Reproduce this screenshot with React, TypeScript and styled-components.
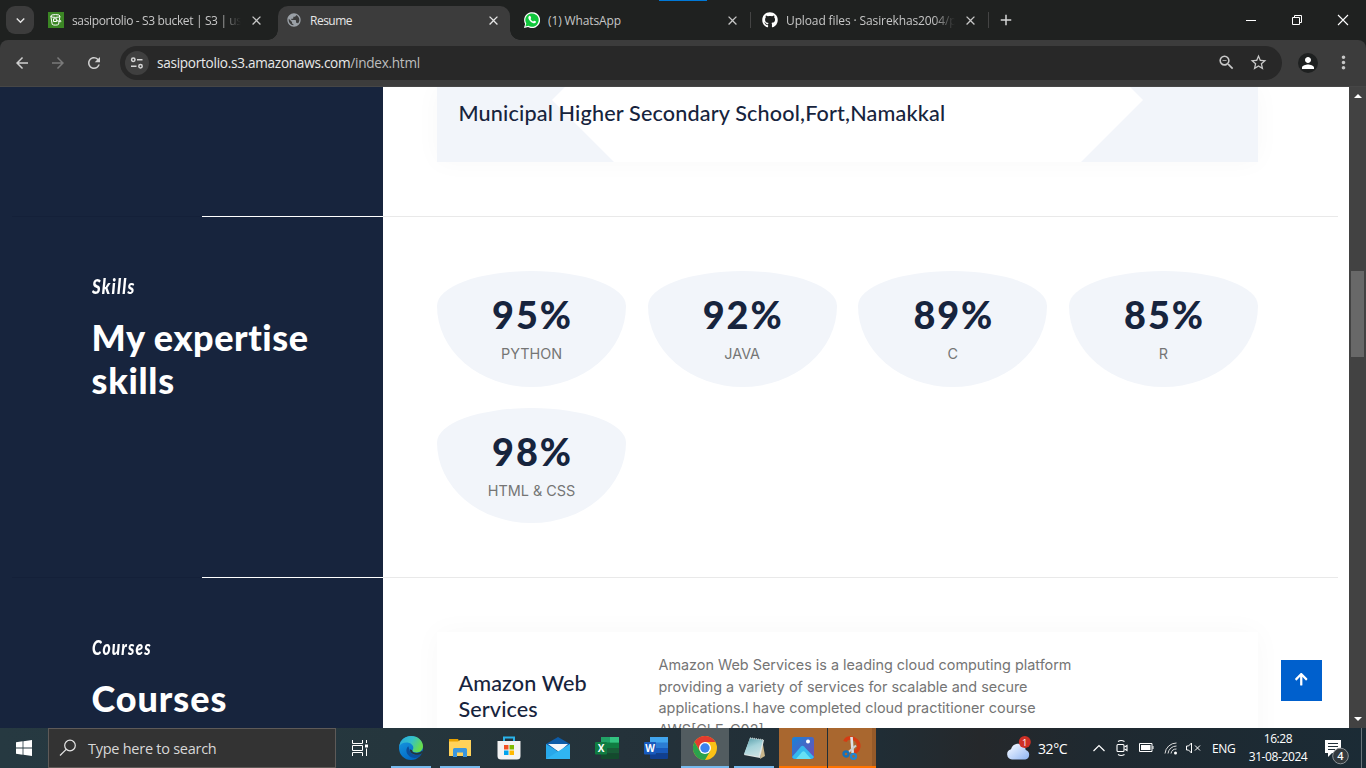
import React from "react";
import styled, { createGlobalStyle, css } from "styled-components";
import {
  MdArrowBack, MdArrowForward, MdRefresh, MdOutlineZoomOut, MdStarBorder,
  MdPerson, MdMoreVert, MdPublic, MdClose, MdAdd, MdKeyboardArrowDown,
} from "react-icons/md";
import { FaGithub, FaArrowUp } from "react-icons/fa";

const ui = `"Open Sans", "Noto Sans", sans-serif`;
const display = `Lato, "Liberation Sans", sans-serif`;
const navy = "#17243d";

const Global = createGlobalStyle`
  * { box-sizing: border-box; }
  body { margin: 0; background: #fff; overflow: hidden; }
  svg { display: block; flex: none; }
  h2, h3, p { margin: 0; }
`;

const Screen = styled.div`
  width: 1366px;
  height: 768px;
  display: flex;
  flex-direction: column;
  overflow: hidden;
  font-family: ${ui};
`;

/* Tab strip */
const TabStrip = styled.header`
  position: relative;
  height: 40px;
  flex: none;
  display: flex;
  align-items: flex-end;
  background: #1f2120;
  color: #c7c7c7;
`;
const LoadingMark = styled.i`
  position: absolute;
  top: 0;
  left: 659px;
  width: 48px;
  height: 1px;
  background: #0078d7;
`;
const TabSearch = styled.div`
  width: 28px;
  height: 28px;
  margin: 0 4px 6px 6px;
  border-radius: 9px;
  background: #3c3c3c;
  display: grid;
  place-items: center;
  color: #e4e4e4;
`;
const Tab = styled.div<{ $w: number; $active?: boolean; $pad?: number; $end?: number }>`
  position: relative;
  width: ${(p) => p.$w}px;
  height: 34px;
  padding: 0 ${(p) => p.$end ?? 10}px 6px ${(p) => p.$pad ?? 8}px;
  display: flex;
  align-items: center;
  font-size: 12px;
  ${(p) => p.$active && css`
    background: #3c3c3c;
    color: #e6e6e6;
    border-radius: 10px 10px 0 0;
    &::before, &::after {
      content: "";
      position: absolute;
      bottom: 0;
      width: 10px;
      height: 10px;
    }
    &::before { left: -10px; background: radial-gradient(circle at 0 0, transparent 9.5px, #3c3c3c 10px); }
    &::after { right: -10px; background: radial-gradient(circle at 100% 0, transparent 9.5px, #3c3c3c 10px); }
  `}
`;
const TabTitle = styled.span<{ $fade?: boolean; $ls?: number }>`
  flex: 1;
  min-width: 0;
  margin: 1px 8px 0 8px;
  overflow: hidden;
  white-space: nowrap;
  letter-spacing: ${(p) => p.$ls ?? -0.12}px;
  ${(p) => p.$fade && css`mask-image: linear-gradient(90deg, #000 calc(100% - 22px), transparent);`}
`;
const Divider = styled.i`
  width: 1px;
  height: 16px;
  margin-bottom: 12px;
  background: #444;
`;
const NewTab = styled.div`
  margin: 0 0 11px 8px;
  color: #d5d5d5;
`;
const WindowButtons = styled.div`
  margin-left: auto;
  height: 40px;
  display: flex;
  & > svg { width: 46px; height: 40px; }
`;

/* Toolbar */
const ToolbarBack = styled.div`
  flex: none;
  height: 47px;
  background: #1f2120;
`;
const Toolbar = styled.div`
  height: 47px;
  display: flex;
  align-items: center;
  padding: 0 12px 1px 13px;
  background: #3c3c3c;
  border-radius: 8px 8px 0 0;
  border-bottom: 1px solid #464646;
  color: #c7c7c7;
`;
const NavIcon = styled.span<{ $dim?: boolean; $gap?: number }>`
  margin-right: ${(p) => p.$gap ?? 18}px;
  color: ${(p) => (p.$dim ? "#7a7a7a" : "#cfcfcf")};
`;
const AddressBar = styled.div`
  width: 1162px;
  flex: none;
  height: 34px;
  padding: 0 14px 0 5px;
  display: flex;
  align-items: center;
  border-radius: 17px;
  background: #282828;
`;
const SiteInfo = styled.div`
  width: 24px;
  height: 24px;
  margin-right: 8px;
  border-radius: 50%;
  background: #3f3f3f;
  display: grid;
  place-items: center;
`;
const Url = styled.span`
  flex: 1;
  font-size: 13.6px;
  letter-spacing: -0.28px;
  color: #e8e8e8;
  & > span { color: #bdbdbd; }
`;
const AddressIcon = styled.span`
  margin-left: 13px;
  color: #c9c9c9;
`;
const Avatar = styled.div`
  width: 20px;
  height: 20px;
  flex: none;
  margin: 0 15px 0 16px;
  border-radius: 50%;
  background: #1e2020;
  color: #fff;
  display: grid;
  place-items: center;
`;

/* Web page */
const Viewport = styled.div`
  position: relative;
  height: 641px;
  flex: none;
  display: flex;
`;
const Page = styled.main`
  width: 1349px;
  height: 641px;
  overflow: hidden;
  background: #fff;
`;
const Section = styled.section<{ $h: number }>`
  height: ${(p) => p.$h}px;
  display: flex;
`;
const Side = styled.aside`
  width: 383px;
  flex: none;
  padding: 54px 0 0 91.5px;
  background: ${navy};
  color: #fff;
`;
const Content = styled.div<{ $top: number }>`
  width: 875px;
  padding: ${(p) => p.$top}px 0 0 54px;
`;
const Rule = styled.div`
  height: 1px;
  background: linear-gradient(90deg, ${navy} 0 12px, #142039 12px 202px, #fff 202px 383px, #e9e9e9 383px 1338px, #fff 1338px);
`;
const Kicker = styled.div<{ $squeeze: number }>`
  height: 34px;
  font: italic 900 20px/30px ${display};
  letter-spacing: 1.4px;
  transform: scaleX(${(p) => p.$squeeze});
  transform-origin: left;
`;
const Heading = styled.h2`
  margin-top: 11px;
  width: 240px;
  font: 900 36px/43px ${display};
  white-space: nowrap;
`;
const Line = styled.span<{ $ls: number }>`
  display: block;
  letter-spacing: ${(p) => p.$ls}px;
`;
const SchoolCard = styled.article`
  position: relative;
  height: 75px;
  padding: 13px 21.5px;
  background: #f2f5fa;
  box-shadow: 0 0 27px rgba(0, 0, 0, 0.03);
  &::before {
    content: "";
    position: absolute;
    inset: 0 115px;
    background: #fff;
    clip-path: polygon(13px 0, 0 13px, 62px 100%, 529px 100%, 591px 13px, 578px 0);
  }
`;
const CardTitle = styled.h3<{ $ls: number }>`
  position: relative;
  font: 500 21.6px/26px ${display};
  letter-spacing: ${(p) => p.$ls}px;
  color: ${navy};
  white-space: nowrap;
`;
const SkillGrid = styled.div`
  display: grid;
  grid-template-columns: repeat(4, 1fr);
  column-gap: 21.6px;
  row-gap: 21px;
`;
const Skill = styled.div`
  height: 115.7px;
  padding-top: 21px;
  border-radius: 50% 50% 50% 50% / 30% 30% 70% 70%;
  background: #f2f5fa;
  text-align: center;
`;
const Percent = styled.div`
  font: 900 37.8px/45px ${display};
  letter-spacing: 1.9px;
  padding-left: 2px;
  color: ${navy};
`;
const SkillName = styled.div`
  margin-top: 6px;
  font: 400 14.4px/22px Inter, sans-serif;
  color: #757575;
`;
const CourseCard = styled.article`
  display: flex;
  height: 160px;
  padding: 22px 22px 22px 21.5px;
  box-shadow: 0 0 27px rgba(0, 0, 0, 0.03);
`;
const CourseName = styled.div`
  width: 200px;
  padding-top: 16px;
`;
const CourseText = styled.p`
  font: 400 14.4px/21.6px Inter, sans-serif;
  color: #757575;
  white-space: nowrap;
`;
const ToTop = styled.button`
  position: absolute;
  left: 1281px;
  top: 573px;
  width: 41px;
  height: 41px;
  padding: 0 1px 2px 0;
  border: 0;
  background: #0060cd;
  color: #fff;
  display: grid;
  place-items: center;
`;
const Scrollbar = styled.div`
  width: 17px;
  height: 641px;
  padding: 7px 0;
  display: flex;
  flex-direction: column;
  align-items: center;
  background: #424242;
`;
const Thumb = styled.div`
  width: 13px;
  height: 86px;
  margin: 173px 0 auto;
  background: #686868;
`;

/* Taskbar */
const Taskbar = styled.footer`
  height: 40px;
  flex: none;
  display: flex;
  color: #fff;
  background: linear-gradient(90deg, #263941 0, #25363d 400px, #24323a 620px, #202d35 880px, #25282b 980px, #1f2930 1090px, #1b2b35 1366px);
`;
const Start = styled.div`
  width: 48px;
  display: grid;
  place-items: center;
`;
const SearchBox = styled.div`
  width: 288px;
  display: flex;
  align-items: center;
  gap: 11px;
  padding-left: 10px;
  background: #333;
  border: 1px solid #5e5a58;
  color: #d8d8d8;
  font-size: 14.5px;
  letter-spacing: -0.26px;
`;
const TaskView = styled.div`
  width: 51px;
  padding-right: 3px;
  display: grid;
  place-items: center;
`;
const Apps = styled.div`
  display: flex;
  gap: 1px;
`;
const AppCell = styled.div<{ $bg?: string; $line?: string; $full?: boolean }>`
  width: 48px;
  height: 40px;
  display: grid;
  place-items: center;
  background:
    linear-gradient(${(p) => p.$line ?? "transparent"} 0 0) center bottom / ${(p) => (p.$full ? 48 : 40)}px 2px no-repeat,
    ${(p) => p.$bg ?? "transparent"};
`;
const Tray = styled.div`
  margin-left: auto;
  display: flex;
  align-items: center;
  font-size: 12px;
`;
const Temperature = styled.span`
  width: 61px;
  padding-left: 6px;
  font-size: 14px;
  letter-spacing: -0.4px;
`;
const TrayIcons = styled.div`
  display: flex;
  align-items: center;
  margin-right: 11px;
  gap: 10px;
  & > :last-child { margin-left: -2px; }
`;
const Lang = styled.span`
  width: 29px;
  font-size: 12px;
  letter-spacing: -0.4px;
`;
const Clock = styled.div`
  width: 74px;
  margin: 0 10px 1px 0;
  text-align: center;
  line-height: 18px;
  letter-spacing: -0.4px;
`;
const Notifications = styled.svg`
  margin-top: 8px;
`;
const ShowDesktop = styled.i`
  width: 5px;
  height: 40px;
  margin-left: 10px;
  border-left: 1px solid #69747a;
`;

const S3Icon = () => (
  <svg width="16" height="16" viewBox="0 0 16 16">
    <rect width="16" height="16" fill="#3b8624" />
    <g fill="none" stroke="#fff" strokeWidth="1">
      <ellipse cx="7.4" cy="4" rx="4.6" ry="1.4" />
      <path d="M2.8 4l1.4 8.3c.7 1.1 5.700 1.100 6.400 0L12 4" />
      <path d="M5.500 6.800h3.200v2.700H5.500zM8.700 8.500l3.800 1.200c.9 0 .6-.9-.8-1.900" />
    </g>
  </svg>
);
const WhatsAppIcon = () => (
  <svg width="16" height="16" viewBox="0 0 16 16">
    <path d="M0 16l1.1-4A8 8 0 1 1 4 15z" fill="#fff" />
    <path d="M1.4 14.6l.9-3A6.7 6.7 0 1 1 4.5 13.8z" fill="#10c63b" />
    <path d="M5.1 3.9c-1.4 1.1-.9 3.3 1.2 5.4s4.6 2.7 5.5 1.3c.5-.8.2-1.1-.2-1.3l-1.3-.6c-.5-.2-.7.6-1.2.9-.5 0-2.2-1.4-2.6-2.5.2-.5.8-.8.6-1.3l-.6-1.5c-.2-.5-.9-.7-1.4-.4z" fill="#fff" />
  </svg>
);
const TuneIcon = () => (
  <svg width="14" height="14" viewBox="0 0 14 14" fill="none" stroke="#d6d6d6" strokeWidth="1.5">
    <circle cx="3.3" cy="3.8" r="1.7" /><path d="M7 3.8h5.5M1 10.2h5.5" /><circle cx="10.5" cy="10.2" r="1.7" />
  </svg>
);
const EdgeIcon = () => (
  <svg width="24" height="24" viewBox="0 0 24 24">
    <defs>
      <linearGradient id="e1" x1="0" y1="0" x2="1" y2=".4"><stop stopColor="#27a8e0" /><stop offset=".55" stopColor="#35c1c8" /><stop offset="1" stopColor="#67dc4c" /></linearGradient>
      <linearGradient id="e2" x1="0" y1="0" x2=".6" y2="1"><stop stopColor="#1b9de2" /><stop offset="1" stopColor="#0067c4" /></linearGradient>
    </defs>
    <circle cx="12" cy="12" r="12" fill="url(#e2)" />
    <path d="M.2 10.3C1.5 3.5 6.5 0 12 0c7.300 0 12 5 12 10.300 0 3.700-2.600 6.200-6.200 6.200-3.300 0-4.800-1-4.600-1.900.2-.8 1.300-1.200 1.100-3.300C14 8.700 11.200 6.500 7.500 6.500 4 6.500 1.300 8.200.2 10.300z" fill="url(#e1)" />
    <path d="M9.300 10.300c-2.300 2-2.600 5.700-.3 8.500 2.400 3 6.400 4 9.500 2.800a12 12 0 0 0 4.200-4c-3.200 1.800-8 1.700-10.500-.6-2.300-2.100-1.700-4.500-2.900-6.700z" fill="#0c4f9c" />
    <path d="M13.400 14.200c-.7 1.400.9 2.700 4.400 2.700 2.300 0 4.300-1 5.200-2.100l1.200 1.300-1.500 1.500c-3 1.800-7.700 1.700-10.200-.5-1.300-1.200-1.700-2.600-1.700-3.900z" fill="#26353c" />
  </svg>
);
const FolderIcon = () => (
  <svg width="22" height="20" viewBox="0 0 22 20">
    <path d="M0 1h9l1.500 3H22v13H0z" fill="#e8a200" />
    <path d="M0 3.500h9L11 2h11v16H0z" fill="#ffd25a" />
    <path d="M4 11.500Q4 10 5.500 10h11q1.500 0 1.500 1.500V19h-4v-4.500H8V19H4z" fill="#3a96dd" />
  </svg>
);
const StoreIcon = () => (
  <svg width="24" height="24" viewBox="0 0 24 24">
    <path d="M7 6V1.500h10V6" fill="none" stroke="#2ab3ea" strokeWidth="2" />
    <path d="M.5 5h23v15q0 3.500-3.500 3.500H4Q.5 23.500.5 20z" fill="#f3f3f3" />
    <path d="M7 9h4.500v4.500H7z" fill="#f25022" /><path d="M12.500 9H17v4.500h-4.500z" fill="#7fba00" />
    <path d="M7 14.500h4.500V19H7z" fill="#00a4ef" /><path d="M12.500 14.500H17V19h-4.500z" fill="#ffb900" />
  </svg>
);
const MailIcon = () => (
  <svg width="24" height="22" viewBox="0 0 24 22">
    <path d="M0 7L12 0l12 7v6H0z" fill="#0d5ca8" /><path d="M2 7h20L13 15z" fill="#f3f7fb" />
    <path d="M0 7l12 7.500V22H0z" fill="#28a8ea" /><path d="M24 7L0 22h24z" fill="#30b5f2" />
  </svg>
);
const OfficeIcon = ({ letter, colors }: { letter: string; colors: string[] }) => (
  <svg width="24" height="22" viewBox="0 0 24 22">
    <path d="M6 0h18v6H6z" fill={colors[0]} /><path d="M6 5.500h18V11H6z" fill={colors[1]} />
    <path d="M6 11h18v5.500H6z" fill={colors[2]} /><path d="M6 16.500h18V21q0 1-1 1H7q-1 0-1-1z" fill={colors[3]} />
    {letter === "X" && <path d="M15 0h9v5.500h-9z" fill="#33c481" />}
    <rect y="5" width="12" height="12.500" rx="1" fill={colors[4]} />
    <text x="6" y="15" textAnchor="middle" fontFamily="Open Sans, sans-serif" fontWeight="700" fontSize="10" fill="#fff">{letter}</text>
  </svg>
);
const ChromeIcon = () => (
  <svg width="24" height="24" viewBox="0 0 24 24">
    <circle cx="12" cy="12" r="12" fill="#fbc116" />
    <path d="M1.600 6A12 12 0 0 1 22.400 6H12L6.800 15z" fill="#e33b2e" />
    <path d="M1.600 6A12 12 0 0 0 12 24l5.200-9H6.800z" fill="#2ba24c" />
    <circle cx="12" cy="12" r="6" fill="#fff" /><circle cx="12" cy="12" r="4.700" fill="#3b82ee" />
  </svg>
);
const NotepadIcon = () => (
  <svg width="24" height="24" viewBox="0 0 24 24">
    <defs><linearGradient id="n" x2=".4" y2="1"><stop stopColor="#5299a6" /><stop offset=".55" stopColor="#a4d2d9" /><stop offset="1" stopColor="#c5dfe2" /></linearGradient></defs>
    <path d="M20 3l3 17-5 3z" fill="#c9b68c" /><path d="M8 2l14 2-4 18L2 19z" fill="#dfe5e5" />
    <path d="M8 2l13 2-4.500 16.500L2 18z" fill="url(#n)" /><path d="M8 2l14 2" stroke="#b8c4c6" strokeWidth="1.500" strokeDasharray="1 1" />
  </svg>
);
const PhotosIcon = () => (
  <svg width="22" height="22" viewBox="0 0 22 22">
    <defs><linearGradient id="p" x2="1" y2="1"><stop stopColor="#1683d9" /><stop offset="1" stopColor="#764bb1" /></linearGradient></defs>
    <rect width="22" height="22" rx="2.500" fill="url(#p)" />
    <path d="M0 20L9 9.500q1.500-1.500 3 0L22 20q-1 2-3 2H3q-2 0-3-2z" fill="#35b9ee" />
    <path d="M4 22l6-7q1.500-1.500 3 0l6 7z" fill="#66e0f5" /><circle cx="16" cy="4.500" r="2" fill="#fff" />
  </svg>
);
const SnipIcon = () => (
  <svg width="22" height="24" viewBox="0 0 22 24" fill="none">
    <path d="M4 5.500C5 1.500 11 .8 15 4c4.500 4 3.500 10.500-2 12.500" stroke="#d63b12" strokeWidth="3.400" />
    <path d="M10.500 1l1.200 16" stroke="#dce1e5" strokeWidth="2.600" />
    <path d="M15 9.500L7 16.500" stroke="#c9ced2" strokeWidth="2" />
    <circle cx="5" cy="18" r="2.500" stroke="#1671b9" strokeWidth="2.300" />
    <circle cx="12.500" cy="20.300" r="2.500" stroke="#2385cf" strokeWidth="2.300" />
  </svg>
);
const WeatherIcon = () => (
  <svg width="26" height="26" viewBox="0 0 26 26">
    <defs><linearGradient id="w" y2="1"><stop offset=".2" stopColor="#e7f0ff" /><stop offset="1" stopColor="#8db4f2" /></linearGradient></defs>
    <path d="M6 24.500a5.200 5.200 0 0 1-1-10.200A7.500 7.500 0 0 1 18.500 12q1 1 1.200 3a4.900 4.900 0 0 1-.5 9.500z" fill="url(#w)" />
    <circle cx="18.800" cy="7" r="6" fill="#cf3026" />
    <text x="18.800" y="10.500" fontSize="9.500" textAnchor="middle" fontFamily="Open Sans, sans-serif" fill="#fff">1</text>
  </svg>
);

const skills = [["95%", "PYTHON"], ["92%", "JAVA"], ["89%", "C"], ["85%", "R"], ["98%", "HTML & CSS"]];

export default function App() {
  return (
    <Screen>
      <Global />
      <TabStrip>
        <LoadingMark />
        <TabSearch><MdKeyboardArrowDown size={17} /></TabSearch>
        <Tab $w={240} $pad={10} $end={14}>
          <S3Icon /><TabTitle $fade $ls={-0.36}>sasiportolio - S3 bucket | S3 | us-east-1</TabTitle><MdClose size={15} />
        </Tab>
        <Tab $w={232} $active $end={9}>
          <MdPublic size={16} color="#9aa0a6" /><TabTitle $ls={-0.5}>Resume</TabTitle><MdClose size={15} />
        </Tab>
        <Tab $w={240} $pad={14}>
          <WhatsAppIcon /><TabTitle>(1) WhatsApp</TabTitle><MdClose size={15} />
        </Tab>
        <Divider />
        <Tab $w={237} $pad={11}>
          <FaGithub size={16} color="#fff" /><TabTitle $fade>Upload files · Sasirekhas2004/portfolio</TabTitle><MdClose size={15} />
        </Tab>
        <Divider />
        <NewTab><MdAdd size={18} /></NewTab>
        <WindowButtons>
          <svg viewBox="0 0 46 40"><path d="M18 20.500h10" stroke="#fff" /></svg>
          <svg viewBox="0 0 46 40" fill="none" stroke="#fff"><path d="M18.500 17.500h7v7h-7zM20.500 17.500v-2h7v7h-2" /></svg>
          <svg viewBox="0 0 46 40"><path d="M18 15l10 10M28 15L18 25" stroke="#fff" strokeWidth="1.100" /></svg>
        </WindowButtons>
      </TabStrip>
      <ToolbarBack>
        <Toolbar>
          <NavIcon><MdArrowBack size={18} /></NavIcon>
          <NavIcon $dim><MdArrowForward size={18} /></NavIcon>
          <NavIcon $gap={17}><MdRefresh size={18} /></NavIcon>
          <AddressBar>
            <SiteInfo><TuneIcon /></SiteInfo>
            <Url>sasiportolio.s3.amazonaws.com<span>/index.html</span></Url>
            <AddressIcon><MdOutlineZoomOut size={19} /></AddressIcon>
            <AddressIcon><MdStarBorder size={19} /></AddressIcon>
          </AddressBar>
          <Avatar><MdPerson size={18} /></Avatar>
          <MdMoreVert size={21} />
        </Toolbar>
      </ToolbarBack>

      <Viewport>
        <Page>
          <Section $h={129}>
            <Side />
            <Content $top={0}>
              <SchoolCard><CardTitle $ls={0.16}>Municipal Higher Secondary School,Fort,Namakkal</CardTitle></SchoolCard>
            </Content>
          </Section>
          <Rule />
          <Section $h={360}>
            <Side>
              <Kicker $squeeze={0.84}>Skills</Kicker>
              <Heading><Line $ls={0.55}>My expertise</Line><Line $ls={0.7}>skills</Line></Heading>
            </Side>
            <Content $top={54}>
              <SkillGrid>
                {skills.map(([value, name]) => (
                  <Skill key={name}><Percent>{value}</Percent><SkillName>{name}</SkillName></Skill>
                ))}
              </SkillGrid>
            </Content>
          </Section>
          <Rule />
          <Section $h={220}>
            <Side>
              <Kicker $squeeze={0.78}>Courses</Kicker>
              <Heading><Line $ls={0.95}>Courses</Line><Line $ls={1.6}>Attained</Line></Heading>
            </Side>
            <Content $top={54}>
              <CourseCard>
                <CourseName><CardTitle $ls={0.1}>Amazon Web<br />Services</CardTitle></CourseName>
                <CourseText>
                  Amazon Web Services is a leading cloud computing platform<br />
                  providing a variety of services for scalable and secure<br />
                  applications.I have completed cloud practitioner course<br />
                  AWS[CLF-C02]
                </CourseText>
              </CourseCard>
            </Content>
          </Section>
        </Page>
        <Scrollbar>
          <svg width="8" height="4" viewBox="0 0 8 4"><path d="M0 4l4-4 4 4z" fill="#fff" /></svg>
          <Thumb />
          <svg width="8" height="4" viewBox="0 0 8 4"><path d="M0 0l4 4 4-4z" fill="#fff" /></svg>
        </Scrollbar>
        <ToTop><FaArrowUp size={14.5} /></ToTop>
      </Viewport>

      <Taskbar>
        <Start>
          <svg width="16" height="16" viewBox="0 0 16 16" fill="#fff"><path d="M0 2.300L6.600 1.300v6.300H0zM7.400 1.200L16 0v7.600H7.400zM0 8.400h6.600v6.300L0 13.700zM7.400 8.400H16V16l-8.600-1.200z" /></svg>
        </Start>
        <SearchBox>
          <svg width="18" height="18" viewBox="0 0 18 18" fill="none" stroke="#e6e6e6" strokeWidth="1.200"><circle cx="11" cy="6.500" r="5.300" /><path d="M7.200 10.300L1 16.500" /></svg>
          Type here to search
        </SearchBox>
        <TaskView>
          <svg width="18" height="16" viewBox="0 0 18 16" fill="none" stroke="#fff"><path d="M1.500 0v3.500h10V0M1.500 16v-3.500h10V16M1.500 5.500h10v5h-10zM15.500 0v3M15.500 8.500V16" /><path d="M14 4.500h3v3h-3z" fill="#fff" stroke="none" /></svg>
        </TaskView>
        <Apps>
          <AppCell $line="#76b9ed"><EdgeIcon /></AppCell>
          <AppCell $line="#76b9ed"><FolderIcon /></AppCell>
          <AppCell><StoreIcon /></AppCell>
          <AppCell><MailIcon /></AppCell>
          <AppCell><OfficeIcon letter="X" colors={["#21a366", "#107c41", "#185c37", "#134b2d", "#107c41"]} /></AppCell>
          <AppCell><OfficeIcon letter="W" colors={["#41a5ee", "#2b7cd3", "#185abd", "#103f91", "#185abd"]} /></AppCell>
          <AppCell $bg="#525c60" $line="#76b9ed" $full><ChromeIcon /></AppCell>
          <AppCell $line="#76b9ed"><NotepadIcon /></AppCell>
          <AppCell $bg="#a9672f" $line="#ff7300" $full><PhotosIcon /></AppCell>
          <AppCell $bg="linear-gradient(90deg, #a9672f 44px, #965a29 44px)" $line="#ff7300" $full><SnipIcon /></AppCell>
        </Apps>
        <Tray>
          <WeatherIcon />
          <Temperature>32°C</Temperature>
          <TrayIcons>
            <svg width="12" height="8" viewBox="0 0 12 8" fill="none" stroke="#fff" strokeWidth="1.200"><path d="M.5 7L6 1.500 11.500 7" /></svg>
            <svg width="14" height="18" viewBox="0 0 14 18" fill="none" stroke="#fff" strokeWidth="1.100"><rect x="2" y="5.500" width="7" height="7" rx="1" /><path d="M9.500 8l2.500-1.500v5L9.500 10M3 2.500q3-2 6.500 0M3 15.500q3 2 6.500 0" /></svg>
            <svg width="15" height="10" viewBox="0 0 15 10"><path d="M.5.5h12.500v8H.5zM14 3v3" fill="none" stroke="#fff" /><path d="M2 2h9.500v5H2z" fill="#fff" /></svg>
            <svg width="14" height="14" viewBox="0 0 14 14" fill="none" stroke="#ddd"><path d="M1 12.500A11.500 11.500 0 0 1 12.500 2M4 12.500A8.500 8.500 0 0 1 12.500 5M7 12.500A5.500 5.500 0 0 1 12.500 8" /><circle cx="11.500" cy="12" r="1.500" fill="#fff" stroke="none" /></svg>
            <svg width="15" height="12" viewBox="0 0 15 12" fill="none" stroke="#fff"><path d="M.5 4h2l3-3v10l-3-3h-2zM9 3.500l5 5M14 3.500l-5 5" /></svg>
          </TrayIcons>
          <Lang>ENG</Lang>
          <Clock>16:28<br />31-08-2024</Clock>
          <Notifications width="26" height="26" viewBox="1 0 26 26">
            <path d="M1 1h16v13H8l-4 4v-4H1z" fill="#fff" /><path d="M4 4.500h10M4 7.500h10M4 10.500h7" stroke="#22313a" />
            <circle cx="16.500" cy="17" r="7.800" fill="#343a3e" stroke="#8c9296" />
            <text x="16.500" y="21" fontSize="11" fontWeight="600" textAnchor="middle" fontFamily="Open Sans, sans-serif" fill="#fff">4</text>
          </Notifications>
          <ShowDesktop />
        </Tray>
      </Taskbar>
    </Screen>
  );
}
